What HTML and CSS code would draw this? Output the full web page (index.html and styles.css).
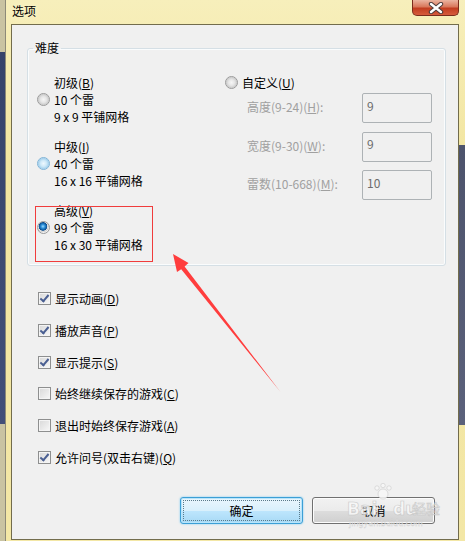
FILE: index.html
```html
<!DOCTYPE html>
<html lang="zh-CN">

<head>
    <meta charset="UTF-8">
    <title>选项</title>
    <link rel="stylesheet" href="styles.css">
</head>

<body>
    <div id="window">
        <div id="titlebar">
            <span id="title">选项</span>
            <div id="close-btn">
                <svg width="18" height="12" viewBox="0 0 18 12">
                    <path d="M4 2 L14 10 M14 2 L4 10" stroke="#4a3a3a" stroke-width="4.4" stroke-linecap="round" />
                    <path d="M4 2 L14 10 M14 2 L4 10" stroke="#ffffff" stroke-width="2.4" stroke-linecap="round" />
                </svg>
            </div>
        </div>

        <div id="client">
            <fieldset id="difficulty">
                <legend>难度</legend>
                <div class="difficulty-body">
                    <div class="levels">
                        <div class="level">
                            <span class="radio"></span>
                            <div class="level-text">
                                <div>初级(<u>B</u>)</div>
                                <div>10 个雷</div>
                                <div>9 x 9 平铺网格</div>
                            </div>
                        </div>
                        <div class="level">
                            <span class="radio hover"></span>
                            <div class="level-text">
                                <div>中级(<u>I</u>)</div>
                                <div>40 个雷</div>
                                <div>16 x 16 平铺网格</div>
                            </div>
                        </div>
                        <div class="level">
                            <span class="radio on"></span>
                            <div class="level-text">
                                <div>高级(<u>V</u>)</div>
                                <div>99 个雷</div>
                                <div>16 x 30 平铺网格</div>
                            </div>
                        </div>
                    </div>

                    <div class="custom">
                        <div class="custom-head"><span class="radio"></span><span>自定义(<u>U</u>)</span></div>
                        <div class="field">
                            <label>高度(9-24)(<u>H</u>):</label>
                            <input type="text" value="9" disabled>
                        </div>
                        <div class="field">
                            <label>宽度(9-30)(<u>W</u>):</label>
                            <input type="text" value="9" disabled>
                        </div>
                        <div class="field">
                            <label>雷数(10-668)(<u>M</u>):</label>
                            <input type="text" value="10" disabled>
                        </div>
                    </div>
                </div>
            </fieldset>

            <div class="options">
                <div class="option"><span class="check on"></span><span>显示动画(<u>D</u>)</span></div>
                <div class="option"><span class="check on"></span><span>播放声音(<u>P</u>)</span></div>
                <div class="option"><span class="check on"></span><span>显示提示(<u>S</u>)</span></div>
                <div class="option"><span class="check"></span><span>始终继续保存的游戏(<u>C</u>)</span></div>
                <div class="option"><span class="check"></span><span>退出时始终保存游戏(<u>A</u>)</span></div>
                <div class="option"><span class="check on"></span><span>允许问号(双击右键)(<u>Q</u>)</span></div>
            </div>

            <div class="buttons">
                <button class="btn default">确定</button>
                <button class="btn">取消</button>
            </div>
        </div>
    </div>

    <!-- annotation layer: red box, arrow and watermark -->
    <svg id="marks" width="465" height="541" viewBox="0 0 465 541">
        <rect x="35.5" y="206.5" width="117" height="55" fill="none" stroke="#f03c3c" stroke-width="1" />
        <polygon points="173,254 188.5,263 184.6,266.4 280.5,392 181.2,269.2 177,272" fill="#ff3d3d" />
        <g class="watermark">
            <text x="347" y="515" class="wm-big">Bai</text>
            <text x="393" y="515" class="wm-big">du</text>
            <text x="412" y="514" class="wm-cn">经验</text>
            <text x="349" y="526" class="wm-small">jingyan.baidu.com</text>
            <circle cx="383" cy="494" r="5" />
            <circle cx="377" cy="488" r="2.2" />
            <circle cx="383" cy="485.5" r="2.2" />
            <circle cx="389" cy="488" r="2.2" />
        </g>
    </svg>
</body>

</html>
```

FILE: styles.css
```css
body {
    margin: 0;
    width: 465px;
    height: 541px;
    overflow: hidden;
    position: relative;
    font-family: "Noto Sans CJK SC", "Microsoft YaHei", sans-serif;
    font-size: 12px;
    color: #000;
    background:
        linear-gradient(#36436a, #424f78) 0 52px / 5px 372px no-repeat,
        linear-gradient(#4d536c, #5b617b) 459px 145px / 6px 280px no-repeat,
        linear-gradient(to right, #c9c3a2 0, #c9c3a2 5px, #8d8a78 5px, #8d8a78 6px, transparent 6px),
        linear-gradient(#f7efbb, #f2e5a0 30%, #f3e7a6);
}

#window {
    height: 541px;
    box-sizing: border-box;
    padding: 0 6px 1px 11px;
    display: flex;
    flex-direction: column;
}

#titlebar {
    height: 24px;
    display: flex;
    justify-content: space-between;
    align-items: flex-start;
}

#title {
    padding-left: 1px;
    line-height: 22px;
    text-shadow: 0 0 6px #fff8d8;
}

#close-btn {
    width: 47px;
    height: 16px;
    box-sizing: border-box;
    border: 1px solid #7a2c1c;
    border-top: none;
    border-radius: 0 0 5px 5px;
    background: linear-gradient(#ebb4a0, #d9785c 45%, #c23d20 55%, #d65c3c);
    display: flex;
    align-items: center;
    justify-content: center;
}

#client {
    flex: 1;
    box-sizing: border-box;
    border: 1px solid #726c4c;
    background: #f0f0f0;
    display: flex;
    flex-direction: column;
    padding: 15px 12px 15px 15px;
}

#difficulty {
    margin: 0;
    padding: 0;
    border: 1px solid #d5dfe5;
    border-radius: 3px;
    box-shadow: inset 0 0 0 1px #fafcfd;
}

#difficulty legend {
    margin-left: 5px;
    padding: 0 2px;
    line-height: 16px;
}

.difficulty-body {
    display: grid;
    grid-template-columns: 189px auto;
    padding: 18px 0 12px 9px;
}

.levels {
    display: flex;
    flex-direction: column;
    gap: 13px;
}

.level {
    display: flex;
    align-items: center;
    gap: 4px;
}

.level-text div,
.custom-head,
.option {
    line-height: 17px;
    white-space: nowrap;
}

.radio {
    width: 13px;
    height: 13px;
    box-sizing: border-box;
    flex: none;
    border-radius: 50%;
    border: 1px solid #9a9a9a;
    background: radial-gradient(circle at 50% 50%, #f6f6f6 0, #e6e6e6 3px, #cfcfcf 5px, #f2f2f2 6px);
}

.radio.hover {
    border-color: #7fb3d6;
    background: radial-gradient(circle at 50% 50%, #eef8fe 0, #cfe9f8 3px, #a9d3ee 5px, #eaf6fd 6px);
}

.radio.on {
    background: radial-gradient(circle at 45% 40%, #9edcff 0, #2c8fd8 2px, #0b4c8e 4px, #e2e2e2 4.6px, #d0d0d0 5.5px, #f2f2f2 6px);
}

.custom-head {
    display: flex;
    align-items: center;
    gap: 4px;
    margin-left: -1px;
}

.field {
    display: flex;
    align-items: center;
    margin-top: 8.5px;
}

.custom-head + .field {
    margin-top: 2px;
}

.field label {
    width: 136px;
    box-sizing: border-box;
    padding: 0 0 3px 21px;
    color: #a0a0a0;
    white-space: nowrap;
}

.field input {
    width: 70px;
    height: 30px;
    box-sizing: border-box;
    margin: 0;
    border: 1px solid #adb2b5;
    border-radius: 2px;
    padding: 4px 3px 10px 4px;
    background: #f0f0f0;
    color: #6d6d6d;
    font: 12px "Noto Sans CJK SC", sans-serif;
    opacity: 1;
}

.options {
    margin-top: 24px;
    padding-left: 11px;
    display: flex;
    flex-direction: column;
    gap: 14.8px;
}

.option {
    display: flex;
    align-items: center;
    gap: 4px;
}

.check {
    width: 13px;
    height: 13px;
    box-sizing: border-box;
    flex: none;
    border: 1px solid #8e8f8f;
    background: linear-gradient(135deg, #d8d8d8, #f8f8f8);
    box-shadow: inset 0 0 0 1px #f4f4f4;
    position: relative;
}

.check.on::after {
    content: "";
    position: absolute;
    left: 3px;
    top: 0px;
    width: 3px;
    height: 7px;
    border: solid #4a5f92;
    border-width: 0 2px 2px 0;
    transform: rotate(40deg);
}

.buttons {
    margin-top: auto;
    padding-right: 11px;
    display: flex;
    justify-content: flex-end;
    gap: 9px;
}

.btn {
    width: 123px;
    height: 27px;
    margin: 0;
    padding: 0;
    border: 1px solid #707070;
    border-radius: 3px;
    background: linear-gradient(#f2f2f2, #ebebeb 50%, #dddddd 51%, #cfcfcf);
    box-shadow: inset 0 0 0 1px #fcfcfc;
    font: 12px "Noto Sans CJK SC", sans-serif;
    color: #000;
}

.btn.default {
    border-color: #3c9fd6;
    background: linear-gradient(#eaf6fd, #d9f0fc 50%, #bee6fd 51%, #a7d9f5);
    box-shadow: inset 0 0 0 1px #b8e4fa, 0 0 2px #6dc5f1;
    outline: 1px dotted #5a7a8a;
    outline-offset: -4px;
}

#marks {
    position: absolute;
    top: 0;
    left: 0;
    pointer-events: none;
}

.watermark {
    fill: #f8f8f8;
    stroke: #c4c4c4;
    stroke-width: 0.6;
    opacity: 0.85;
}

.wm-big {
    font: bold 17px "DejaVu Sans", sans-serif;
}

.wm-cn {
    font: 14px "Noto Sans CJK SC", sans-serif;
}

.wm-small {
    font: 8px "DejaVu Sans", sans-serif;
    stroke-width: 0.3;
}
```
